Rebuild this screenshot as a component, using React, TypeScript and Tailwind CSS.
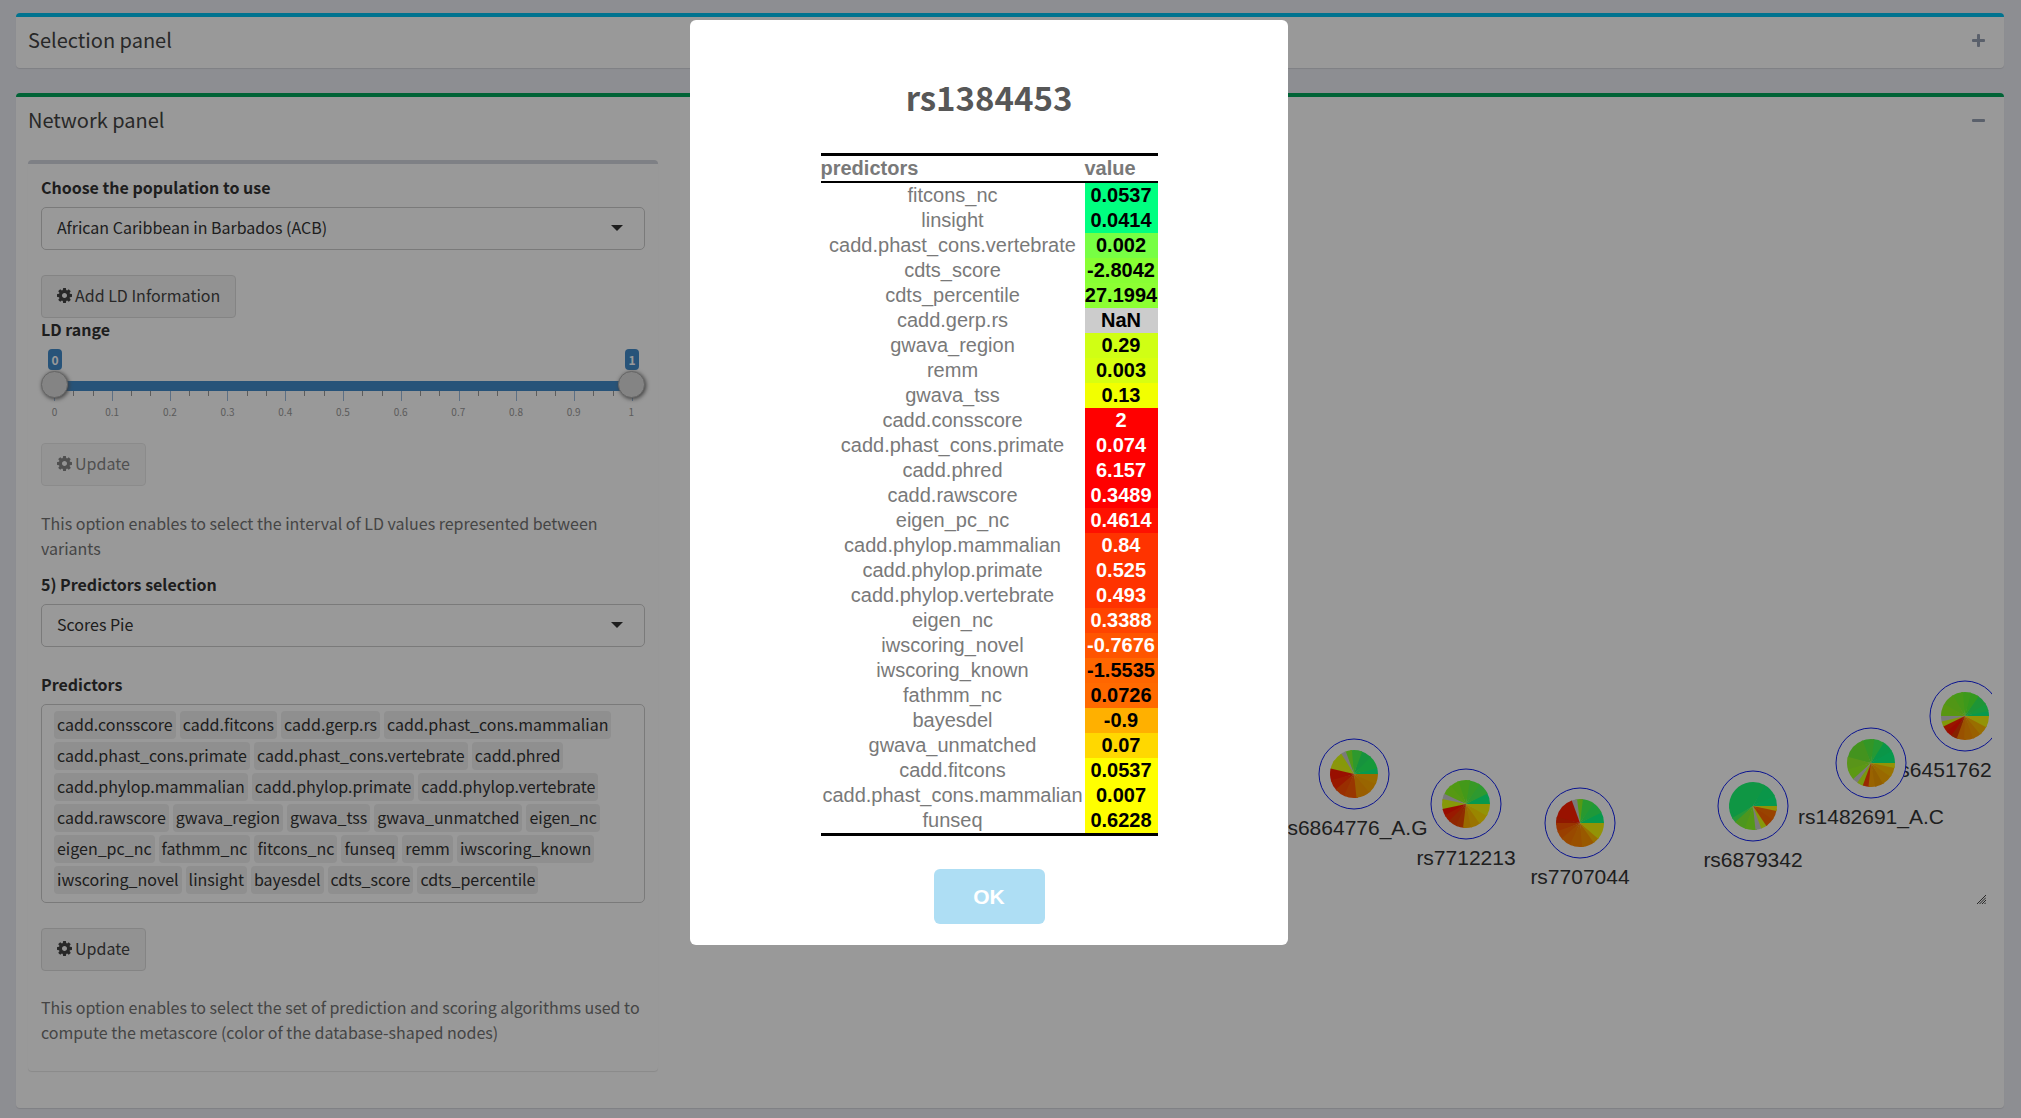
import { ReactNode, useState } from "react";

const UI_FONT = "font-['Noto_Sans_CJK_SC','Noto_Sans',sans-serif]";
const HELVETICA = "font-['Liberation_Sans',Arial,sans-serif]";

const COG_PATH =
  "M1152 896q0-106-75-181t-181-75-181 75-75 181 75 181 181 75 181-75 75-181zm512-109v222q0 12-8 23t-20 13l-185 28q-19 54-39 91 35 50 107 138 10 12 10 25t-9 23q-27 37-99 108t-94 71q-12 0-26-9l-138-108q-44 23-91 38-16 136-29 186-7 28-36 28h-222q-14 0-24.5-8.5t-11.5-21.5l-28-184q-49-16-90-37l-141 107q-10 9-25 9-14 0-25-11-126-114-165-168-7-10-7-23 0-12 8-23 15-21 51-66.5t54-70.5q-27-50-41-99l-183-27q-13-2-21-12.5t-8-23.5v-222q0-12 8-23t19-13l186-28q14-46 39-92-40-57-107-138-10-12-10-24 0-10 9-23 26-36 98.5-107.5t94.5-71.5q13 0 26 10l138 107q44-23 91-38 16-136 29-186 7-28 36-28h222q14 0 24.5 8.5t11.5 21.5l28 184q49 16 90 37l142-107q9-9 24-9 13 0 25 10 129 119 165 170 7 8 7 22 0 12-8 23-15 21-51 66.5t-54 70.5q26 50 41 98l183 28q13 2 21 12.5t8 23.5z";

function Cog() {
  return (
    <svg viewBox="128 128 1536 1536" className="size-[15px] shrink-0" fill="currentColor" aria-hidden="true">
      <path d={COG_PATH} />
    </svg>
  );
}

function ActionButton({ children, disabled }: { children: ReactNode; disabled?: boolean }) {
  return (
    <button
      type="button"
      disabled={disabled}
      className="flex h-[43px] items-center gap-[3px] rounded-[4px] border border-[#dddddd] bg-[#f4f4f4] px-[15px] pb-[2px] text-[16px] leading-[25px] text-[#444444] disabled:opacity-65"
    >
      <Cog />
      {children}
    </button>
  );
}

function SelectField({ id, label, value }: { id: string; label: string; value: string }) {
  return (
    <div>
      <label htmlFor={id} className="mb-[8px] block leading-[23px] font-bold">
        {label}
      </label>
      <div className="relative">
        <select
          id={id}
          className="block h-[43px] w-full appearance-none rounded-[5px] border border-[#cccccc] bg-white px-[15px] pb-[2px] text-[16px] text-[#333333]"
        >
          <option>{value}</option>
        </select>
        <svg viewBox="0 0 12 6" className="pointer-events-none absolute top-[18px] right-[22px] h-[6px] w-[12px]" fill="#333333" aria-hidden="true">
          <path d="M0 0h12L6 6z" />
        </svg>
      </div>
    </div>
  );
}

const RANGE =
  "pointer-events-none absolute inset-x-0 top-[28px] h-[27px] w-full appearance-none bg-transparent [&::-webkit-slider-thumb]:pointer-events-auto [&::-webkit-slider-thumb]:size-[27px] [&::-webkit-slider-thumb]:appearance-none [&::-webkit-slider-thumb]:rounded-full [&::-webkit-slider-thumb]:border [&::-webkit-slider-thumb]:border-[#aaaaaa] [&::-webkit-slider-thumb]:bg-[#dddddd] [&::-webkit-slider-thumb]:shadow-[1px_1px_4px_#666666]";

const TICKS = ["0", "0.1", "0.2", "0.3", "0.4", "0.5", "0.6", "0.7", "0.8", "0.9", "1"];

function RangeSlider() {
  const [low, setLow] = useState(0);
  const [high, setHigh] = useState(1);
  return (
    <div>
      <label htmlFor="ld-low" className="mb-[2px] block leading-[23px] font-bold">
        LD range
      </label>
      <div className="relative h-[100px]">
        <div className="flex justify-between pt-[6px] pr-[6px] pl-[7px] text-[12px] leading-[21px] font-bold text-white">
          <span className="w-[14px] rounded-[4px] bg-[#428bca] text-center">{low}</span>
          <span className="w-[14px] rounded-[4px] bg-[#428bca] text-center">{high}</span>
        </div>
        <div className="mx-[4px] mt-[11px] h-[10px] bg-[#428bca]" />
        <div className="flex px-[13px]">
          {TICKS.slice(0, 10).map((t) => (
            <div key={t} className="grid h-[10px] flex-1 grid-cols-3 items-start">
              <span className="h-[10px] w-px bg-[#99b9dd]" />
              <span className="h-[5px] w-px bg-[#999999]" />
              <span className="h-[5px] w-px bg-[#999999]" />
            </div>
          ))}
          <span className="-mr-px h-[10px] w-px bg-[#99b9dd]" />
        </div>
        <div className="-mx-[15px] flex justify-between text-[10px] leading-[21px] text-[#999999]">
          {TICKS.map((t) => (
            <span key={t} className="w-[57px] text-center">
              {t}
            </span>
          ))}
        </div>
        <input id="ld-low" type="range" min={0} max={1} step={0.01} value={low} onChange={(e) => setLow(Math.min(+e.target.value, high))} className={RANGE} />
        <input aria-label="LD range maximum" type="range" min={0} max={1} step={0.01} value={high} onChange={(e) => setHigh(Math.max(+e.target.value, low))} className={RANGE} />
      </div>
    </div>
  );
}

const PREDICTORS = [
  "cadd.consscore", "cadd.fitcons", "cadd.gerp.rs", "cadd.phast_cons.mammalian",
  "cadd.phast_cons.primate", "cadd.phast_cons.vertebrate", "cadd.phred",
  "cadd.phylop.mammalian", "cadd.phylop.primate", "cadd.phylop.vertebrate",
  "cadd.rawscore", "gwava_region", "gwava_tss", "gwava_unmatched", "eigen_nc",
  "eigen_pc_nc", "fathmm_nc", "fitcons_nc", "funseq", "remm", "iwscoring_known",
  "iwscoring_novel", "linsight", "bayesdel", "cdts_score", "cdts_percentile",
];

function ControlBox() {
  return (
    <section className="w-[630px] shrink-0 rounded-[4px] border-t-4 border-[#d2d6de] bg-white px-[13px] pt-3 pb-[26px] text-[16px] leading-[25px] text-[#333333] shadow-[0_1px_1px_rgba(0,0,0,0.1)]">
      <SelectField id="population" label="Choose the population to use" value="African Caribbean in Barbados (ACB)" />
      <div className="mt-[25px]">
        <ActionButton>Add LD Information</ActionButton>
      </div>
      <RangeSlider />
      <ActionButton disabled>Update</ActionButton>
      <p className="mt-[25px] mb-[12px] text-[#737373]">
        This option enables to select the interval of LD values represented between variants
      </p>
      <SelectField id="scores" label="5) Predictors selection" value="Scores Pie" />
      <h3 className="mt-[26px] mb-[8px] leading-[23px] font-bold">Predictors</h3>
      <ul className="flex flex-wrap gap-x-[4px] gap-y-[3px] rounded-[5px] border border-[#cccccc] px-[12px] pt-[6px] pb-[8px]">
        {PREDICTORS.map((p) => (
          <li key={p} className="h-[28px] rounded-[4px] bg-[#efefef] px-[3px] leading-[27px]">
            {p}
          </li>
        ))}
      </ul>
      <div className="mt-[25px]">
        <ActionButton>Update</ActionButton>
      </div>
      <p className="mt-[24px] text-[#737373]">
        This option enables to select the set of prediction and scoring algorithms used to compute the metascore (color of the database-shaped nodes)
      </p>
    </section>
  );
}

type Slice = [end: number, color: string];
type PieNode = { label: string; x: number; y: number; labelX?: number; slices: Slice[] };

// Slice ends are degrees, counter-clockwise from three o'clock.
const NODES: PieNode[] = [
  {
    label: "rs6451762", x: 1282, y: 556, labelX: 1259,
    slices: [
      [12, "#0dff80"], [30, "#26ff66"], [55, "#33f85c"], [75, "#55ff33"], [95, "#66ff2e"], [120, "#77ff29"], [150, "#88fa26"], [180, "#95fa1e"],
      [193, "#cccccc"], [206, "#d5ff10"], [220, "#ff2200"], [235, "#ff1500"], [250, "#e03800"], [268, "#ff8800"], [290, "#ff9500"], [310, "#ffa000"], [332, "#ffb800"], [360, "#f5f50a"],
    ],
  },
  {
    label: "rs1482691_A.C", x: 1188, y: 603,
    slices: [
      [30, "#0dff80"], [58, "#12fa78"], [82, "#40ff55"], [110, "#55fa40"], [165, "#70f533"], [195, "#95f82a"], [222, "#99ff22"],
      [235, "#cccccc"], [250, "#c8ff18"], [264, "#ff4400"], [280, "#ffa500"], [300, "#f59d00"], [325, "#ffb000"], [348, "#ffc000"], [360, "#f5f50a"],
    ],
  },
  {
    label: "rs6879342", x: 1070, y: 646,
    slices: [
      [25, "#0dff80"], [60, "#12fa7a"], [210, "#1afa72"], [222, "#40ff60"], [250, "#80fa33"], [276, "#8cff26"],
      [290, "#cccccc"], [304, "#e0ff14"], [325, "#ff6600"], [348, "#ff7000"], [360, "#f5f50a"],
    ],
  },
  {
    label: "rs7707044", x: 897, y: 663,
    slices: [
      [26, "#0dff80"], [55, "#33ff60"], [83, "#44ff50"], [97, "#90ff22"], [110, "#cccccc"],
      [165, "#ff1e00"], [180, "#f02800"], [200, "#ff5500"], [220, "#ff6a00"], [245, "#ff7a00"], [275, "#ff8500"], [305, "#ff9500"], [319, "#ffbb00"], [360, "#f5f50a"],
    ],
  },
  {
    label: "rs7712213", x: 783, y: 644,
    slices: [
      [26, "#0dff80"], [55, "#4dff50"], [80, "#5cff40"], [108, "#70ff2a"], [130, "#85ff22"], [155, "#90ff20"],
      [168, "#cccccc"], [192, "#dfff10"], [208, "#ff1500"], [225, "#ff2a00"], [245, "#f04000"], [263, "#f04a00"], [282, "#ffb000"], [305, "#ffc000"], [330, "#ffdf00"], [360, "#f5f50a"],
    ],
  },
  {
    label: "rs6864776_A.G", x: 671, y: 614,
    slices: [
      [13, "#0dff80"], [45, "#26ff62"], [70, "#26f566"], [95, "#4dff4d"], [110, "#85ff2a"],
      [122, "#cccccc"], [145, "#e0ff10"], [167, "#e8fa14"], [195, "#ff1a00"], [220, "#ff2a00"], [245, "#ff4d00"], [276, "#ff5a00"], [310, "#ff9d00"], [335, "#ffa800"], [360, "#ffb300"],
    ],
  },
];

function wedge(cx: number, cy: number, r: number, a: number, b: number) {
  const pt = (d: number) => `${cx + r * Math.cos((d * Math.PI) / 180)} ${cy - r * Math.sin((d * Math.PI) / 180)}`;
  return `M${cx} ${cy}L${pt(a)}A${r} ${r} 0 ${b - a > 180 ? 1 : 0} 0 ${pt(b)}Z`;
}

function NetworkCanvas() {
  return (
    <div className="relative ml-[25px] h-[744px] min-w-0 flex-1 overflow-hidden">
      <svg className={`block size-full text-[21px] ${HELVETICA}`} role="img" aria-label="Variant network">
        {NODES.map((n) => (
          <g key={n.label}>
            <text x={n.labelX ?? n.x} y={n.y + 61} textAnchor="middle" fill="#343434">
              {n.label}
            </text>
            <circle cx={n.x} cy={n.y} r={35} fill="#ffffff" stroke="#1020f0" />
            {n.slices.map(([end, color], i) => (
              // Each slice runs a little under the next one, which leaves no seam.
              <path key={end} d={wedge(n.x, n.y, 24, i ? n.slices[i - 1][0] : 0, end === 360 ? end : end + 4)} fill={color} />
            ))}
          </g>
        ))}
      </svg>
      <svg viewBox="0 0 9 9" className="absolute right-[6px] bottom-0 size-[9px]" stroke="#444444" aria-hidden="true">
        <path d="M0 9 9 0M2.5 9 9 2.5M5 9 9 5M7.5 9 9 7.5" />
      </svg>
    </div>
  );
}

const ROWS: [string, string, string][] = [
  ["fitcons_nc", "0.0537", "bg-[#00ff80] text-black"],
  ["linsight", "0.0414", "bg-[#00ff80] text-black"],
  ["cadd.phast_cons.vertebrate", "0.002", "bg-[#77ff44] text-black"],
  ["cdts_score", "-2.8042", "bg-[#88ff33] text-black"],
  ["cdts_percentile", "27.1994", "bg-[#8cff33] text-black"],
  ["cadd.gerp.rs", "NaN", "bg-[#cccccc] text-black"],
  ["gwava_region", "0.29", "bg-[#d0ff14] text-black"],
  ["remm", "0.003", "bg-[#d8ff10] text-black"],
  ["gwava_tss", "0.13", "bg-[#f2ff00] text-black"],
  ["cadd.consscore", "2", "bg-[#ff0000] text-white"],
  ["cadd.phast_cons.primate", "0.074", "bg-[#ff0000] text-white"],
  ["cadd.phred", "6.157", "bg-[#ff0000] text-white"],
  ["cadd.rawscore", "0.3489", "bg-[#ff0000] text-white"],
  ["eigen_pc_nc", "0.4614", "bg-[#ff1100] text-white"],
  ["cadd.phylop.mammalian", "0.84", "bg-[#ff3300] text-white"],
  ["cadd.phylop.primate", "0.525", "bg-[#ff3300] text-white"],
  ["cadd.phylop.vertebrate", "0.493", "bg-[#ff3300] text-white"],
  ["eigen_nc", "0.3388", "bg-[#ff4400] text-white"],
  ["iwscoring_novel", "-0.7676", "bg-[#ff5500] text-white"],
  ["iwscoring_known", "-1.5535", "bg-[#ff6600] text-black"],
  ["fathmm_nc", "0.0726", "bg-[#ff6a00] text-black"],
  ["bayesdel", "-0.9", "bg-[#ffb000] text-black"],
  ["gwava_unmatched", "0.07", "bg-[#ffd800] text-black"],
  ["cadd.fitcons", "0.0537", "bg-[#ffff00] text-black"],
  ["cadd.phast_cons.mammalian", "0.007", "bg-[#ffff00] text-black"],
  ["funseq", "0.6228", "bg-[#ffff00] text-black"],
];

function ScoreDialog() {
  return (
    <div className="fixed inset-0 flex items-start justify-center bg-black/40 pt-5 pr-[43px]">
      <div role="dialog" aria-modal="true" aria-labelledby="variant-title" className="flex w-[598px] flex-col items-center rounded-[6px] bg-white p-[21px]">
        <h2 id="variant-title" className="my-[31px] text-[33px] leading-[50px] font-bold text-[#575757]">
          rs1384453
        </h2>
        <table className={`border-collapse text-[20px] leading-[25px] text-[#797979] ${HELVETICA}`}>
          <thead>
            <tr className="border-t-3 border-b-2 border-black text-left font-bold">
              <th className="w-[264px] p-0">predictors</th>
              <th className="w-[73px] p-0">value</th>
            </tr>
          </thead>
          <tbody className="border-b-3 border-black text-center">
            {ROWS.map(([name, value, tone]) => (
              <tr key={name}>
                <td className="p-0">{name}</td>
                <td className={`p-0 font-bold ${tone}`}>{value}</td>
              </tr>
            ))}
          </tbody>
        </table>
        <button type="button" className={`mt-[33px] h-[55px] w-[111px] rounded-[6px] bg-[#aedef4] text-[21px] font-bold text-white ${HELVETICA}`}>
          OK
        </button>
      </div>
    </div>
  );
}

function PanelHeader({ title, open }: { title: string; open: boolean }) {
  return (
    <header className="flex h-[51px] items-center justify-between px-3">
      <h2 className="pb-[7px] text-[20px] leading-[25px] text-[#444444]">{title}</h2>
      <button type="button" aria-label={open ? "Collapse" : "Expand"} className="mr-[7px] mb-[5px] p-0 text-[#97a0b3]">
        <svg viewBox="0 0 13 13" className="size-[13px]" fill="currentColor" aria-hidden="true">
          <rect y="5" width="13" height="3" rx="1" />
          {!open && <rect x="5" width="3" height="13" rx="1" />}
        </svg>
      </button>
    </header>
  );
}

export default function App() {
  return (
    <div className={`min-h-screen bg-[#ecedf4] ${UI_FONT}`}>
      <main className="flex flex-col gap-[25px] pt-[13px] pr-[17px] pb-[10px] pl-4">
        <section className="rounded-[4px] border-t-4 border-[#00c0ef] bg-white shadow-[0_1px_1px_rgba(0,0,0,0.1)]">
          <PanelHeader title="Selection panel" open={false} />
        </section>
        <section className="rounded-[4px] border-t-4 border-[#00a65a] bg-white shadow-[0_1px_1px_rgba(0,0,0,0.1)]">
          <PanelHeader title="Network panel" open />
          <div className="flex items-start px-3 pt-3 pb-[37px]">
            <ControlBox />
            <NetworkCanvas />
          </div>
        </section>
      </main>
      <ScoreDialog />
    </div>
  );
}
